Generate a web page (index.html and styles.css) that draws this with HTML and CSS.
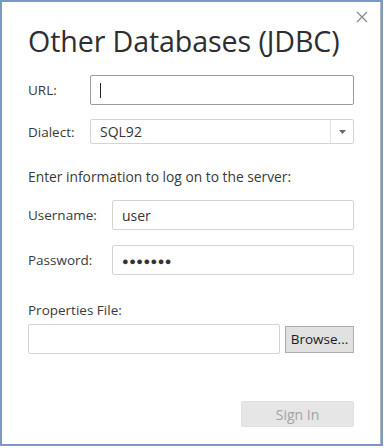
FILE: index.html
```html
<!DOCTYPE html>
<html lang="en">
<head>
    <meta charset="UTF-8">
    <meta name="viewport" content="width=device-width, initial-scale=1.0">
    <title>Other Databases (JDBC)</title>
    <link rel="stylesheet" href="styles.css">
</head>
<body>
    <div class="dialog">
        <button class="close-btn" type="button" aria-label="Close">
            <svg width="12" height="12" viewBox="0 0 12 12">
                <path d="M1 1 L11 11 M11 1 L1 11" stroke="#8a8a8a" stroke-width="1.3" fill="none"/>
            </svg>
        </button>

        <h1>Other Databases (JDBC)</h1>

        <div class="row row-url">
            <label class="label label-short">URL:</label>
            <div class="field field-focus"><span class="caret"></span></div>
        </div>

        <div class="row row-dialect">
            <label class="label label-short">Dialect:</label>
            <div class="select">
                <span class="select-value">SQL92</span>
                <span class="select-arrow">
                    <svg width="7" height="4" viewBox="0 0 7 4"><path d="M0 0 H7 L3.5 4 Z" fill="#666"/></svg>
                </span>
            </div>
        </div>

        <p class="hint">Enter information to log on to the server:</p>

        <div class="row row-user">
            <label class="label label-long">Username:</label>
            <div class="field"><span class="value">user</span></div>
        </div>

        <div class="row row-pass">
            <label class="label label-long">Password:</label>
            <div class="field"><span class="value dots">●●●●●●●</span></div>
        </div>

        <div class="props">
            <label class="label">Properties File:</label>
            <div class="props-row">
                <div class="field field-file"></div>
                <button class="browse-btn" type="button">Browse...</button>
            </div>
        </div>

        <div class="footer">
            <button class="signin-btn" type="button" disabled>Sign In</button>
        </div>
    </div>
</body>
</html>
```

FILE: styles.css
```css
:root {
    --frame: #7d97c9;
    --text: #333333;
    --border: #d4d4d4;
    --border-dark: #9a9a9a;
}

* {
    margin: 0;
    padding: 0;
    box-sizing: border-box;
}

body {
    font-family: "Open Sans", "Noto Sans", sans-serif;
    color: var(--text);
    background: #ffffff;
    width: 386px;
    height: 448px;
}

.dialog {
    position: relative;
    width: 383px;
    height: 446px;
    border: 2px solid var(--frame);
    box-shadow: inset -1px 0 0 #b5b5b5;
    padding: 0 27px 0 26px;
}

.close-btn {
    position: absolute;
    top: 8px;
    right: 12px;
    border: none;
    background: none;
    width: 14px;
    height: 14px;
    display: flex;
    align-items: center;
    justify-content: center;
}

h1 {
    font-weight: 400;
    font-size: 28.6px;
    line-height: 36px;
    margin-top: 21px;
    letter-spacing: -0.1px;
    color: #2e2e2e;
}

.row {
    display: flex;
    align-items: center;
}

.label {
    font-size: 13.5px;
    color: #3a3a3a;
}

.label-short {
    width: 62px;
    flex-shrink: 0;
}

.label-long {
    width: 84px;
    flex-shrink: 0;
}

.field {
    flex: 1;
    height: 30px;
    border: 1px solid var(--border);
    border-radius: 2px;
    display: flex;
    align-items: center;
    padding-left: 9px;
    font-size: 14px;
}

.field-focus {
    border-color: var(--border-dark);
}

.caret {
    width: 1px;
    height: 15px;
    background: #222;
}

.row-url {
    margin-top: 16px;
}

.row-dialect {
    margin-top: 14px;
}

.select {
    flex: 1;
    height: 25px;
    border: 1px solid var(--border);
    border-radius: 2px;
    display: flex;
    align-items: center;
    font-size: 14px;
}

.select-value {
    flex: 1;
    padding-left: 9px;
}

.select-arrow {
    width: 23px;
    height: 100%;
    border-left: 1px solid #e2e2e2;
    display: flex;
    align-items: center;
    justify-content: center;
}

.hint {
    font-size: 13.8px;
    color: #3a3a3a;
    margin-top: 23px;
}

.row-user {
    margin-top: 14px;
}

.row-pass {
    margin-top: 15px;
}

.dots {
    font-size: 11px;
    letter-spacing: 0.5px;
}

.props {
    margin-top: 23px;
}

.props-row {
    display: flex;
    align-items: center;
    gap: 5px;
    margin-top: 4px;
}

.field-file {
    flex: none;
    width: 252px;
}

.browse-btn {
    flex: 1;
    height: 27px;
    border: 1px solid #adadad;
    background: #e1e1e1;
    font-family: "Open Sans", "Noto Sans", sans-serif;
    font-size: 13.5px;
    color: #1a1a1a;
}

.footer {
    display: flex;
    justify-content: flex-end;
    margin-top: 47px;
}

.signin-btn {
    width: 113px;
    height: 26px;
    border: 1px solid #e0e0e0;
    border-radius: 2px;
    background: #e6e6e6;
    color: #a3a3a3;
    font-family: "Open Sans", "Noto Sans", sans-serif;
    font-size: 14px;
}
```
